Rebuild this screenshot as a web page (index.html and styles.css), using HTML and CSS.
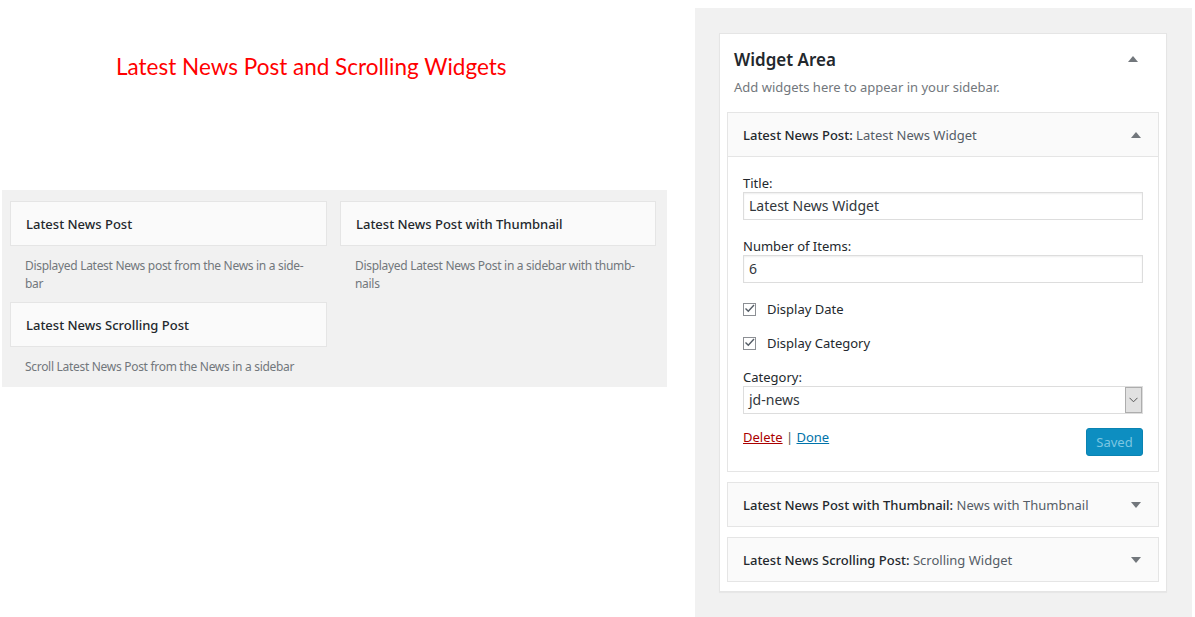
FILE: index.html
```html
<!DOCTYPE html>
<html>
<head>
<meta charset="utf-8">
<link rel="stylesheet" href="styles.css">
</head>
<body>
<div class="page">
  <div class="left">
    <h1 class="main-title">Latest News Post and Scrolling Widgets</h1>
    <div class="available">
      <div class="col">
        <div class="card"><span>Latest News Post</span></div>
        <p class="desc">Displayed Latest News post from the News in a side-<br>bar</p>
        <div class="card"><span>Latest News Scrolling Post</span></div>
        <p class="desc">Scroll Latest News Post from the News in a sidebar</p>
        <div class="card-edge"></div>
      </div>
      <div class="col">
        <div class="card"><span>Latest News Post with Thumbnail</span></div>
        <p class="desc">Displayed Latest News Post in a sidebar with thumb-<br>nails</p>
      </div>
    </div>
  </div>
  <div class="right">
    <div class="sidebar">
      <div class="sidebar-head">
        <h2>Widget Area</h2>
        <svg class="arrow" width="10" height="6" viewBox="0 0 10 6"><path d="M0 6 L5 0 L10 6 Z" fill="#72777c"/></svg>
      </div>
      <p class="sidebar-desc">Add widgets here to appear in your sidebar.</p>

      <div class="widget open">
        <div class="widget-top">
          <span class="wt"><b>Latest News Post:</b> <span class="in">Latest News Widget</span></span>
          <svg class="arrow" width="10" height="6" viewBox="0 0 10 6"><path d="M0 6 L5 0 L10 6 Z" fill="#72777c"/></svg>
        </div>
        <div class="widget-inside">
          <label class="lbl">Title:</label>
          <div class="input">Latest News Widget</div>
          <label class="lbl">Number of Items:</label>
          <div class="input">6</div>
          <div class="check">
            <span class="box"><svg width="13" height="13" viewBox="0 0 13 13"><path d="M2.5 6.5 L5.3 9.3 L11 3" fill="none" stroke="#555d66" stroke-width="1.4"/></svg></span>
            <span>Display Date</span>
          </div>
          <div class="check">
            <span class="box"><svg width="13" height="13" viewBox="0 0 13 13"><path d="M2.5 6.5 L5.3 9.3 L11 3" fill="none" stroke="#555d66" stroke-width="1.4"/></svg></span>
            <span>Display Category</span>
          </div>
          <label class="lbl cat">Category:</label>
          <div class="select">
            <span>jd-news</span>
            <span class="sel-btn"><svg width="9" height="6" viewBox="0 0 9 6"><path d="M0.5 0.8 L4.5 4.8 L8.5 0.8" fill="none" stroke="#555" stroke-width="1"/></svg></span>
          </div>
          <div class="actions">
            <div class="links"><a class="del">Delete</a> | <a class="done">Done</a></div>
            <span class="btn">Saved</span>
          </div>
        </div>
      </div>

      <div class="widget">
        <div class="widget-top">
          <span class="wt"><b>Latest News Post with Thumbnail:</b> <span class="in">News with Thumbnail</span></span>
          <svg class="arrow" width="10" height="6" viewBox="0 0 10 6"><path d="M0 0 L5 6 L10 0 Z" fill="#72777c"/></svg>
        </div>
      </div>

      <div class="widget">
        <div class="widget-top">
          <span class="wt"><b>Latest News Scrolling Post:</b> <span class="in">Scrolling Widget</span></span>
          <svg class="arrow" width="10" height="6" viewBox="0 0 10 6"><path d="M0 0 L5 6 L10 0 Z" fill="#72777c"/></svg>
        </div>
      </div>
    </div>
  </div>
</div>
</body>
</html>
```

FILE: styles.css
```css
* { box-sizing: border-box; }
html, body { margin: 0; padding: 0; background: #fff; }
body { font-family: "Noto Sans", "Open Sans", sans-serif; font-size: 13px; color: #23282d; }

.page { display: flex; align-items: flex-start; }

.left { width: 667px; padding-left: 2px; }
.main-title {
  margin: 0;
  height: 190px;
  padding: 52px 0 0 114px;
  font-family: "Lato", "Open Sans", sans-serif;
  font-weight: 400;
  font-size: 22.5px;
  line-height: 30px;
  color: #ff0000;
}
.available {
  background: #f1f1f1;
  height: 197px;
  display: flex;
  gap: 13px;
  padding: 11px 11px 0 8px;
  overflow: hidden;
}
.col { width: 317px; }
.col + .col { width: 316px; }
.card {
  height: 45px;
  background: #fafafa;
  border: 1px solid #e5e5e5;
  padding: 0 15px;
  display: flex;
  align-items: center;
  font-size: 13px;
  font-weight: 500;
  color: #23282d;
}
.desc {
  margin: 11px 0 9px;
  padding-left: 15px;
  font-size: 12px;
  letter-spacing: -0.3px;
  line-height: 18px;
  color: #72777c;
}
.card-edge { height: 10px; border-top: 1px solid #e5e5e5; margin-top: 11px; }

.right {
  margin-left: 28px;
  margin-top: 8px;
  width: 497px;
  height: 609px;
  background: #f1f1f1;
  padding: 25px 25px 0 24px;
}
.sidebar {
  background: #fff;
  border: 1px solid #e5e5e5;
  box-shadow: 0 1px 1px rgba(0,0,0,.04);
  padding: 0 7px 9px;
}
.sidebar-head {
  display: flex;
  justify-content: space-between;
  align-items: center;
  padding: 12px 21px 0 7px;
  height: 38px;
}
.sidebar-head h2 {
  margin: 0;
  font-size: 17px;
  font-weight: 600;
  color: #23282d;
}
.sidebar-desc {
  margin: 0;
  padding: 5px 0 0 7px;
  height: 40px;
  font-size: 13px;
  line-height: 20px;
  color: #72777c;
}
.widget { border: 1px solid #e5e5e5; background: #fafafa; margin-bottom: 10px; }
.widget:last-child { margin-bottom: 0; }
.widget-top {
  height: 43px;
  display: flex;
  align-items: center;
  justify-content: space-between;
  padding: 0 17px 0 15px;
}
.widget.open .widget-top { border-bottom: 1px solid #e5e5e5; height: 44px; }
.wt { font-size: 13px; color: #23282d; }
.wt b { font-weight: 500; }
.wt .in { color: #555d66; }
.widget-inside { background: #fff; padding: 17px 15px 15px; }
.lbl { display: block; font-size: 13px; line-height: 18px; color: #23282d; }
.input {
  height: 28px;
  margin-top: 0;
  margin-bottom: 17px;
  border: 1px solid #ddd;
  box-shadow: inset 0 1px 2px rgba(0,0,0,.07);
  padding: 0 5px;
  font-size: 14px;
  line-height: 26px;
  color: #32373c;
}
.check { display: flex; align-items: center; gap: 11px; height: 20px; margin-top: -1px; margin-bottom: 15px; font-size: 13px; }
.box {
  width: 13px; height: 13px;
  border: 1px solid #8c8f94;
  position: relative;
}
.box svg { position: absolute; left: -1px; top: -2px; }
.lbl.cat { margin-top: 12px; }
.select {
  height: 28px;
  border: 1px solid #ddd;
  display: flex;
  justify-content: space-between;
  align-items: stretch;
  font-size: 14px;
  color: #32373c;
  padding-left: 5px;
}
.select span:first-child { line-height: 26px; }
.sel-btn {
  width: 17px;
  background: #e1e1e1;
  border: 1px solid #adadad;
  display: flex; align-items: center; justify-content: center;
}
.actions {
  display: flex;
  justify-content: space-between;
  align-items: flex-start;
  margin-top: 14px;
}
.links { font-size: 13px; line-height: 18px; color: #555; }
.links a { text-decoration: underline; }
.del { color: #a00; }
.done { color: #0073aa; }
.btn {
  height: 28px;
  width: 57px;
  border-radius: 3px;
  background: #0d8ec1;
  border: 1px solid #0a83b2;
  color: #7cc6e2;
  font-size: 13px;
  display: flex; align-items: center; justify-content: center;
}
```
